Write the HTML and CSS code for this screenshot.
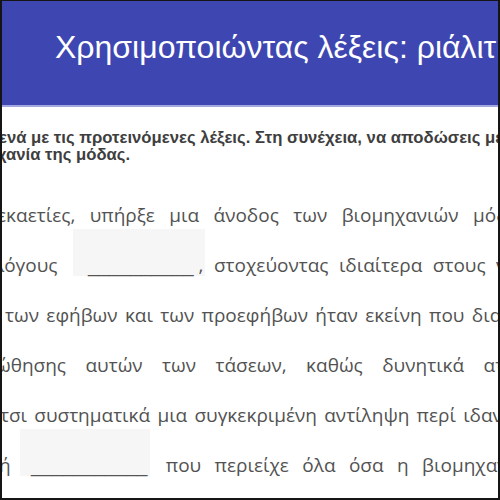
FILE: index.html
```html
<!DOCTYPE html>
<html lang="el">
<head>
<meta charset="utf-8">
<title>Χρησιμοποιώντας λέξεις</title>
<link rel="stylesheet" href="styles.css">
</head>
<body>
<div class="frame">
  <header class="banner">
    <h1 class="title">Χρησιμοποιώντας λέξεις: ριάλιτι σόου</h1>
  </header>
  <p class="intro">
    <span class="intro-line i1">ενά με τις προτεινόμενες λέξεις. Στη συνέχεια, να αποδώσεις με</span>
    <span class="intro-line i2">χανία της μόδας.</span>
  </p>
  <div class="text">
    <div class="line l1">εκαετίες, υπήρξε μια άνοδος των βιομηχανιών μόδας</div>
    <div class="line l2">λόγους <span class="blank b2">__________</span>, στοχεύοντας ιδιαίτερα στους νέους</div>
    <div class="line l3">των εφήβων και των προεφήβων ήταν εκείνη που διαδραμάτισε</div>
    <div class="line l4">ώθησης αυτών των τάσεων, καθώς δυνητικά ατομικά</div>
    <div class="line l5">τσι συστηματικά μια συγκεκριμένη αντίληψη περί ιδανικού</div>
    <div class="line l6">ή <span class="blank b6">___________</span> που περιείχε όλα όσα η βιομηχανία</div>
  </div>
</div>
</body>
</html>
```
FILE: styles.css
```css
html, body {
  margin: 0;
  padding: 0;
  background: #ffffff;
}

.frame {
  box-sizing: border-box;
  width: 500px;
  height: 500px;
  border: 2px solid #151515;
  border-top-width: 1px;
  overflow: hidden;
  font-family: "Liberation Sans", Arial, sans-serif;
}

.banner {
  box-sizing: border-box;
  height: 106px;
  background: #3e47b1;
  border-bottom: 2px solid #a3a9e0;
  display: flex;
  align-items: center;
  padding: 0 0 12px 53px;
}

.title {
  margin: 0;
  color: #ffffff;
  font-size: 32px;
  font-weight: normal;
  white-space: nowrap;
}

.intro {
  margin: 22px 0 0 0;
  font-size: 16.7px;
  font-weight: bold;
  line-height: 17px;
  color: #3e3e3e;
}

.intro-line {
  display: block;
  white-space: nowrap;
}

.i1 { margin-left: -3px; }
.i2 { margin-left: -5px; }

.text {
  margin-top: 27px;
  font-family: "Open Sans", "Liberation Sans", sans-serif;
  font-size: 19px;
  line-height: 50px;
  color: #525252;
}

.line {
  white-space: nowrap;
}

.l1 { margin-left: -5px; word-spacing: 9.5px; }
.l2 { margin-left: -8px; word-spacing: 5.5px; }
.l3 { margin-left: 3px; word-spacing: 2.4px; }
.l4 { margin-left: -6px; word-spacing: 14.5px; }
.l5 { margin-left: -2px; word-spacing: 2.3px; }
.l6 { margin-left: -3px; word-spacing: 8.5px; }

.blank {
  display: inline-block;
  background: #f6f6f6;
  font-family: "Liberation Sans", sans-serif;
  font-size: 19px;
  line-height: 17px;
  padding: 28px 11px 2px 15px;
  margin-top: -12px;
  color: #555555;
  word-spacing: 0;
}

.b2 {
  margin-left: 5px;
  margin-right: -6px;
}

.b6 {
  margin-left: -4px;
  margin-right: 2px;
  padding-left: 11px;
  padding-right: 3px;
}
```
